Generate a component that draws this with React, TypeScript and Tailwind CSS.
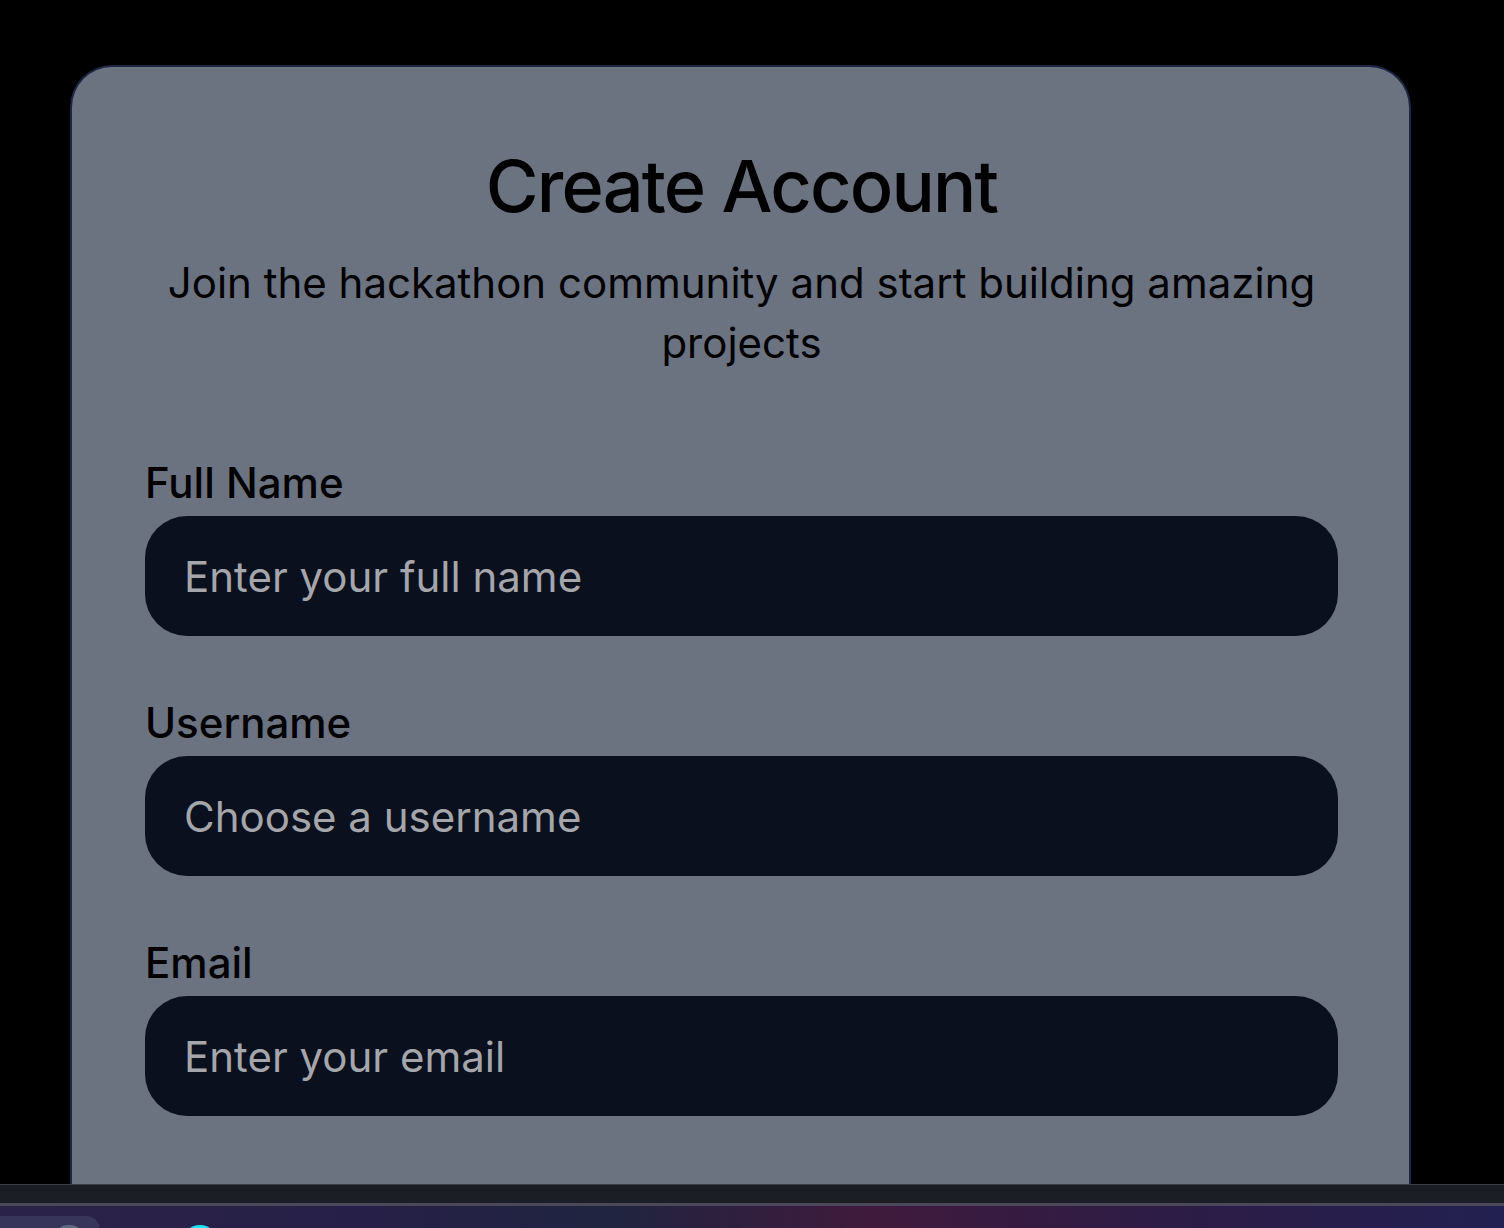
const fields = [
  { id: 'fullName', label: 'Full Name', placeholder: 'Enter your full name', type: 'text' },
  { id: 'username', label: 'Username', placeholder: 'Choose a username', type: 'text' },
  { id: 'email', label: 'Email', placeholder: 'Enter your email', type: 'email' },
]

export default function App() {
  return (
    <div className="flex h-[1228px] flex-col overflow-hidden bg-black font-['Inter',sans-serif]">
      <main className="min-h-0 flex-1 overflow-hidden">
        <div className="ml-[70px] mt-[65px] w-[1341px] rounded-t-[42px] border-2 border-b-0 border-[#1c2541] bg-[#6b7280] pb-[72px] pl-[73px] pr-[71px] pt-[75px]">
          <h1 className="text-center text-[72px] font-medium leading-[88px] tracking-[-0.025em] text-black">Create Account</h1>
          <p className="mx-auto mt-[23px] max-w-[1180px] text-center text-[42px] leading-[60px] text-black">
            Join the hackathon community and start building amazing projects
          </p>

          <form className="mt-[86px] flex flex-col gap-[63px]">
            {fields.map((field) => (
              <div key={field.id}>
                <label htmlFor={field.id} className="mb-[9px] block text-[42px] font-medium leading-[48px] text-black">
                  {field.label}
                </label>
                <input
                  id={field.id}
                  type={field.type}
                  placeholder={field.placeholder}
                  className="block h-[120px] w-full rounded-[42px] bg-[#0b101e] px-[39px] text-[42px] text-white outline-none placeholder:text-[#a4a6ab]"
                />
              </div>
            ))}
          </form>
        </div>
      </main>

      {/* bottom chrome strip */}
      <div className="h-px bg-[#3a3d47]" />
      <div className="h-[18px] bg-[#1b1e25]" />
      <div className="h-[3px] bg-[#4a4859]" />
      <div className="flex h-[22px] items-start overflow-hidden bg-[linear-gradient(90deg,#2a2249_0%,#261f47_25%,#1f2440_40%,#3f1a3c_58%,#2c1c46_78%,#222050_100%)]">
        <div className="mt-[10px] flex h-[30px] w-[100px] shrink-0 rounded-tr-[14px] bg-[#37355a] pl-[53px] pt-[9px]">
          <div className="h-[30px] w-[32px] rounded-full bg-[#5d6b80]" />
        </div>
        <div className="ml-[82px] mt-[19px] h-[36px] w-[36px] shrink-0 rounded-full bg-[#22e3f5]" />
      </div>
    </div>
  )
}
